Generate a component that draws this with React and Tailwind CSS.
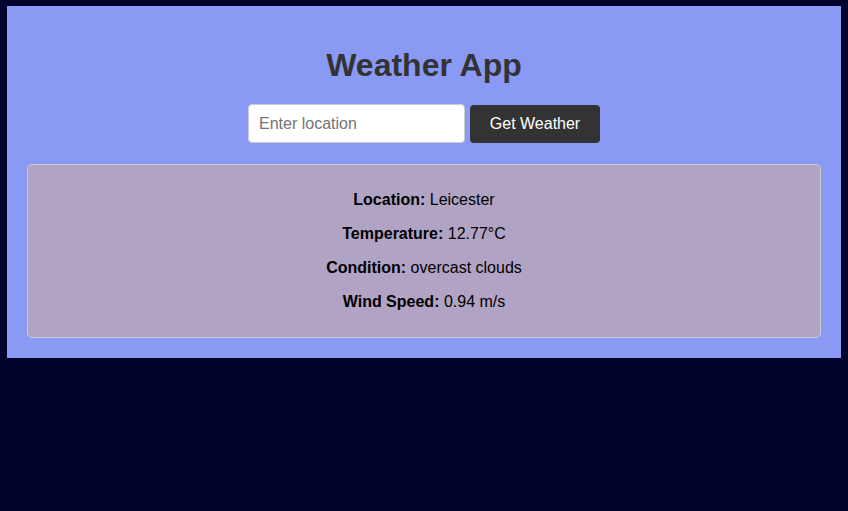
export default function App() {
  return (
    <div className="min-h-[511px] w-full bg-[#00032c] pt-[6px] px-[7px]" style={{ fontFamily: '"Liberation Sans", Arial, sans-serif' }}>
      <div className="bg-[#8a9af4] px-[20px] pt-[20px] pb-[20px] text-center">
        <h1 className="mt-[21px] mb-[20px] text-[32px] font-bold leading-[37px] text-[#333333]">Weather App</h1>
        <div className="flex justify-center items-end gap-[5px]">
          <input
            type="text"
            placeholder="Enter location"
            className="w-[217px] h-[39px] rounded-[4px] border border-[#cccccc] bg-white px-[10px] text-[16px] text-black placeholder:text-[#757575] outline-none"
          />
          <button className="w-[130px] h-[38px] rounded-[4px] bg-[#333333] pb-[1px] text-[16px] text-white">Get Weather</button>
        </div>
        <div className="mt-[21px] rounded-[5px] border border-[#cccccc] bg-[#b1a3c4] px-[10px] py-[10px] text-[16px] leading-[18px] text-black">
          <p className="my-[16px]"><b>Location:</b> Leicester</p>
          <p className="my-[16px]"><b>Temperature:</b> 12.77°C</p>
          <p className="my-[16px]"><b>Condition:</b> overcast clouds</p>
          <p className="my-[16px]"><b>Wind Speed:</b> 0.94 m/s</p>
        </div>
      </div>
    </div>
  );
}
